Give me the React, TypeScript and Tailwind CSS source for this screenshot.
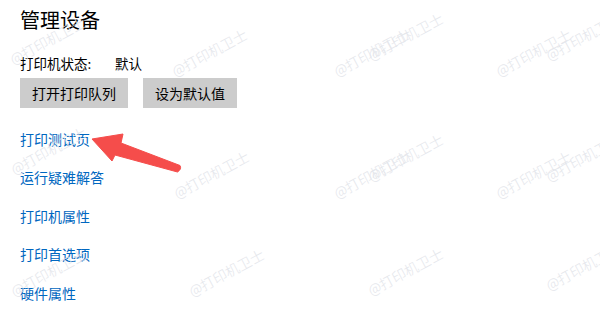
const marks: [number, number][] = [
  [14, 66], [176, 78], [338, 78], [372, 62], [500, 78], [550, 62],
  [15, 176], [178, 200], [338, 200], [372, 183], [500, 200], [550, 183],
  [15, 298], [193, 298], [372, 297], [550, 292],
]

const links = ['打印测试页', '运行疑难解答', '打印机属性', '打印首选项', '硬件属性']

function Arrow() {
  return (
    <svg className="absolute left-0 top-0 pointer-events-none" width="600" height="318">
      <path
        d="M92 139 L123 134 L121 143 L180 165.5 Q182 169 177.5 172 L115 155 L112 161 Z"
        fill="#f54d4b"
        stroke="#f54d4b"
        strokeWidth="1"
        strokeLinejoin="round"
      />
    </svg>
  )
}

export default function App() {
  return (
    <div
      className="relative w-[600px] h-[318px] bg-white overflow-hidden"
      style={{ fontFamily: '"Microsoft YaHei", "Noto Sans CJK SC", "Noto Sans", sans-serif' }}
    >
      <div className="flex flex-col pl-5">
        <h1 className="mt-[6px] text-[20px] leading-[28px] text-black font-normal">管理设备</h1>
        <div className="mt-[19px] flex text-[13.5px] leading-[20px] text-black">
          <span className="w-[95px]">打印机状态:</span>
          <span>默认</span>
        </div>
        <div className="mt-[5px] flex gap-[15px]">
          <button className="h-[30px] px-3 bg-[#cccccc] text-[14px] text-black">打开打印队列</button>
          <button className="h-[30px] px-3 bg-[#cccccc] text-[14px] text-black">设为默认值</button>
        </div>
        <div className="mt-[12px] flex flex-col">
          {links.map((l) => (
            <div key={l} className="h-[38.5px] flex items-center text-[14px] text-[#0067c0]">
              {l}
            </div>
          ))}
        </div>
      </div>

      {/* watermark */}
      <div className="absolute inset-0 pointer-events-none">
        {marks.map(([x, y], i) => (
          <span
            key={i}
            className="absolute whitespace-nowrap text-[14px] leading-none font-light text-[#e4e6eb] origin-bottom-left -rotate-[28deg]"
            style={{ left: x, top: y - 14 }}
          >
            @打印机卫士
          </span>
        ))}
      </div>

      <Arrow />
    </div>
  )
}
